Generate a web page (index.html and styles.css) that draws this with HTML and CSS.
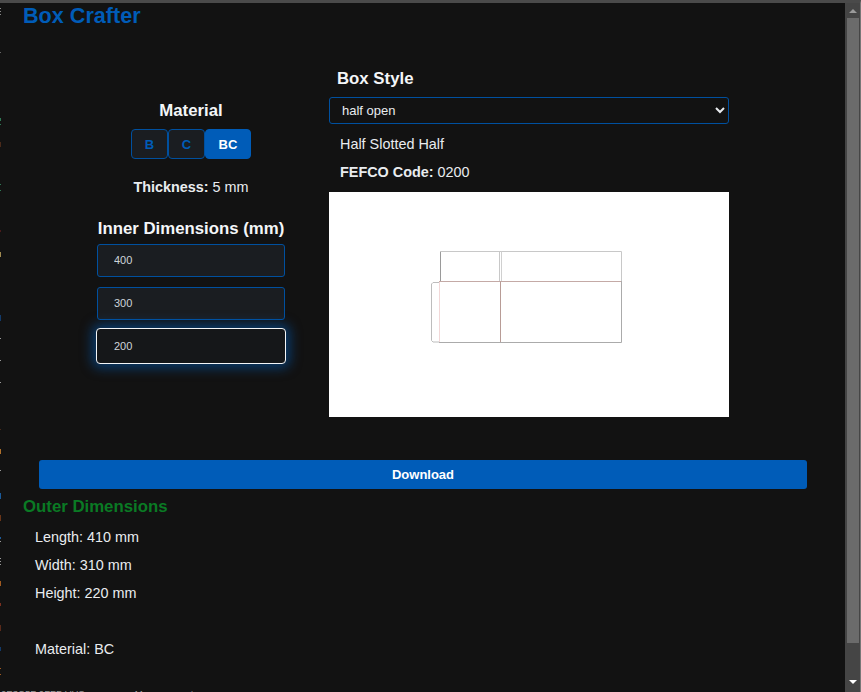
FILE: index.html
```html
<!DOCTYPE html>
<html lang="en">
<head>
    <meta charset="UTF-8">
    <meta name="viewport" content="width=device-width, initial-scale=1.0">
    <title>Box Crafter</title>
    <link rel="stylesheet" href="styles.css">
</head>
<body>

    <svg class="bleed" width="2" height="692">
        <rect y="8" width="1" height="1" fill="#888"/>
        <rect y="11" width="1" height="1" fill="#888"/>
        <rect y="14" width="1" height="1" fill="#888"/>
        <rect y="52" width="1" height="1" fill="#666"/>
        <rect y="118" width="1" height="3" fill="#2f7a55"/>
        <rect y="124" width="1" height="1" fill="#2f7a55"/>
        <rect y="142" width="1" height="5" fill="#4a2a1a"/>
        <rect y="184" width="1" height="1" fill="#2f7a55"/>
        <rect y="190" width="1" height="1" fill="#2f7a55"/>
        <rect y="230" width="1" height="2" fill="#4a1a1a"/>
        <rect y="252" width="1" height="5" fill="#a08a50"/>
        <rect y="315" width="1" height="6" fill="#123a6a"/>
        <rect y="338" width="1" height="1" fill="#999"/>
        <rect y="360" width="1" height="1" fill="#999"/>
        <rect y="382" width="1" height="1" fill="#999"/>
        <rect y="429" width="1" height="1" fill="#4a2a1a"/>
        <rect y="449" width="1" height="5" fill="#b0702a"/>
        <rect y="470" width="1" height="1" fill="#999"/>
        <rect y="493" width="1" height="6" fill="#1a5a9a"/>
        <rect y="515" width="1" height="6" fill="#6a3518"/>
        <rect y="537" width="1" height="2" fill="#1a5a9a"/>
        <rect y="541" width="1" height="1" fill="#999"/>
        <rect y="558" width="1" height="1" fill="#999"/>
        <rect y="561" width="1" height="1" fill="#999"/>
        <rect y="564" width="1" height="1" fill="#999"/>
        <rect y="581" width="1" height="5" fill="#a05a20"/>
        <rect y="603" width="1" height="3" fill="#7a3020"/>
        <rect y="625" width="1" height="6" fill="#5a2a1a"/>
        <rect y="647" width="1" height="4" fill="#123a6a"/>
        <rect y="668" width="1" height="1" fill="#a05a20"/>
        <rect y="674" width="1" height="1" fill="#a05a20"/>
    </svg>

    <div class="window">
        <main class="page">
            <h1 class="brand">Box Crafter</h1>

            <div class="builder">
                <section class="options">
                    <h2 class="heading">Material</h2>
                    <div class="flutes">
                        <button class="flute">B</button>
                        <button class="flute">C</button>
                        <button class="flute active">BC</button>
                    </div>
                    <p class="thickness"><b>Thickness:</b> 5 mm</p>
                    <h2 class="heading dims-title">Inner Dimensions (mm)</h2>
                    <input class="dim first" type="text" value="400">
                    <input class="dim" type="text" value="300">
                    <input class="dim focused" type="text" value="200">
                </section>

                <section class="style">
                    <h2 class="heading style-title">Box Style</h2>
                    <select class="style-select">
                        <option>half open</option>
                    </select>
                    <p class="style-line">Half Slotted Half</p>
                    <p class="style-line"><b>FEFCO Code:</b> 0200</p>
                    <div class="preview">
                        <svg width="400" height="225" viewBox="0 0 400 225" fill="none">
                            <path d="M111.500 89V59.500" stroke="#9a9a9a"/>
                            <path d="M111 59.500H292.500V89" stroke="#c8c8c8"/>
                            <path d="M170.500 59.500V89" stroke="#c8c8c8"/>
                            <path d="M172.500 59.500V89" stroke="#d0d0d0"/>
                            <path d="M110 89.500H292.500" stroke="#c4aaa6"/>
                            <path d="M171.500 89.500V150" stroke="#b89c96"/>
                            <path d="M110 150.500H292.500V89" stroke="#ababab"/>
                            <path d="M110.500 90V150" stroke="#f2d8d8"/>
                            <path d="M110 90.500H104L102.500 92V148.500L104 150H110" stroke="#bdbdbd"/>
                        </svg>
                    </div>
                </section>
            </div>

            <button class="download">Download</button>

            <h2 class="outer-title">Outer Dimensions</h2>
            <div class="outer">
                <p>Length: 410 mm</p>
                <p>Width: 310 mm</p>
                <p>Height: 220 mm</p>
                <p class="material-line">Material: BC</p>
            </div>
            <p class="cut-off">0E3C5F 0FFB VUS<span class="cut-off-gap">Measurements</span></p>
        </main>

        <div class="scrollbar">
            <span class="arrow up"></span>
            <div class="track"><div class="thumb"></div></div>
            <span class="arrow down"></span>
        </div>
    </div>

</body>
</html>
```

FILE: styles.css
```css
* {
    box-sizing: border-box;
}
html, body {
    height: 100%;
}
body {
    margin: 0;
    background-color: #121212;
    color: #e9ecef;
    font-family: "Liberation Sans", Arial, sans-serif;
    overflow: hidden;
}
.bleed {
    position: absolute;
    left: 0;
    top: 0;
}
.window {
    display: flex;
    height: 692px;
    border-top: 3px solid #4a4a4a;
    border-right: 1px solid #777;
}
.page {
    flex: 1;
    min-width: 0;
    overflow: hidden;
    padding-left: 23px;
}
.brand {
    margin: 0;
    font-size: 21.6px;
    line-height: 26px;
    color: #005cb8;
}
.builder {
    display: flex;
    align-items: flex-start;
    margin: 38px 0 0 74px;
    gap: 44px;
}
.heading {
    margin: 0;
    font-size: 16.8px;
    line-height: 24px;
    color: #f4f6f8;
}
.options {
    width: 188px;
    padding-top: 32px;
    display: flex;
    flex-direction: column;
    align-items: center;
}
.flutes {
    display: flex;
    margin-top: 6px;
}
.flute {
    height: 30px;
    width: 37px;
    padding: 0;
    border: 1px solid #00509f;
    border-radius: 4px;
    background-color: #1a1d21;
    color: #005cb8;
    font: bold 13px "Liberation Sans", Arial, sans-serif;
}
.flute.active {
    width: 46px;
    background-color: #005cb8;
    border-color: #005cb8;
    color: #fff;
}
.thickness {
    margin: 19px 0 0;
    font-size: 14.4px;
    line-height: 18px;
}
.dims-title {
    margin-top: 21px;
    white-space: nowrap;
}
.dim {
    display: block;
    flex-shrink: 0;
    width: 188px;
    height: 33px;
    margin-top: 10px;
    padding: 0 16px 2px;
    border: 1px solid #00509f;
    border-radius: 3px;
    background-color: #1a1d21;
    color: #ced4da;
    font: 11px "Liberation Sans", Arial, sans-serif;
    outline: none;
}
.dim.first {
    margin-top: 3px;
}
.dim.focused {
    width: 190px;
    height: 36px;
    margin-top: 8px;
    padding: 0 17px;
    border-color: #f4f6f8;
    border-radius: 4px;
    background-color: #151719;
    box-shadow: 0 0 12px 4px rgba(0, 92, 184, 0.55);
}
.style {
    width: 400px;
}
.style-title {
    padding-left: 8px;
}
.style-select {
    display: block;
    width: 100%;
    height: 27px;
    margin-top: 6px;
    padding: 0 8px;
    border: 1px solid #00509f;
    border-radius: 3px;
    background-color: #121212;
    color: #e9ecef;
    font: 13px "Liberation Sans", Arial, sans-serif;
    color-scheme: dark;
}
.style-line {
    margin: 0;
    padding-left: 11px;
    font-size: 14.4px;
    line-height: 28px;
}
.style-select + .style-line {
    margin-top: 6px;
}
.preview {
    margin-top: 6px;
    height: 225px;
    background-color: #fff;
}
.preview svg {
    display: block;
}
.download {
    display: block;
    width: 768px;
    height: 29px;
    margin: 43px 0 0 16px;
    border: none;
    border-radius: 3px;
    background-color: #005cb8;
    color: #fff;
    font: bold 13px "Liberation Sans", Arial, sans-serif;
}
.outer-title {
    margin: 6px 0 0;
    font-size: 16.8px;
    line-height: 24px;
    color: #0a7a24;
}
.outer {
    padding: 4px 0 0 12px;
    font-size: 14.4px;
    line-height: 28px;
}
.outer p {
    margin: 0;
}
.outer .material-line {
    margin-top: 28px;
}
.cut-off {
    margin: 24px 0 0 -22px;
    font-size: 9.6px;
    line-height: 14px;
    white-space: nowrap;
    color: #999;
}
.cut-off-gap {
    margin-left: 50px;
}
.scrollbar {
    width: 15px;
    flex-shrink: 0;
    background-color: #454545;
    display: flex;
    flex-direction: column;
    align-items: center;
}
.track {
    flex: 1;
    width: 100%;
    padding: 0 1px 0 2px;
}
.thumb {
    height: 625px;
    background-color: #6b6b6b;
}
.arrow {
    width: 0;
    height: 0;
    border-left: 4px solid transparent;
    border-right: 4px solid transparent;
}
.arrow.up {
    margin: 6px 0 5px;
    border-bottom: 4px solid #9a9a9a;
}
.arrow.down {
    margin: 5px 0 8px;
    border-top: 4px solid #fff;
}
```
